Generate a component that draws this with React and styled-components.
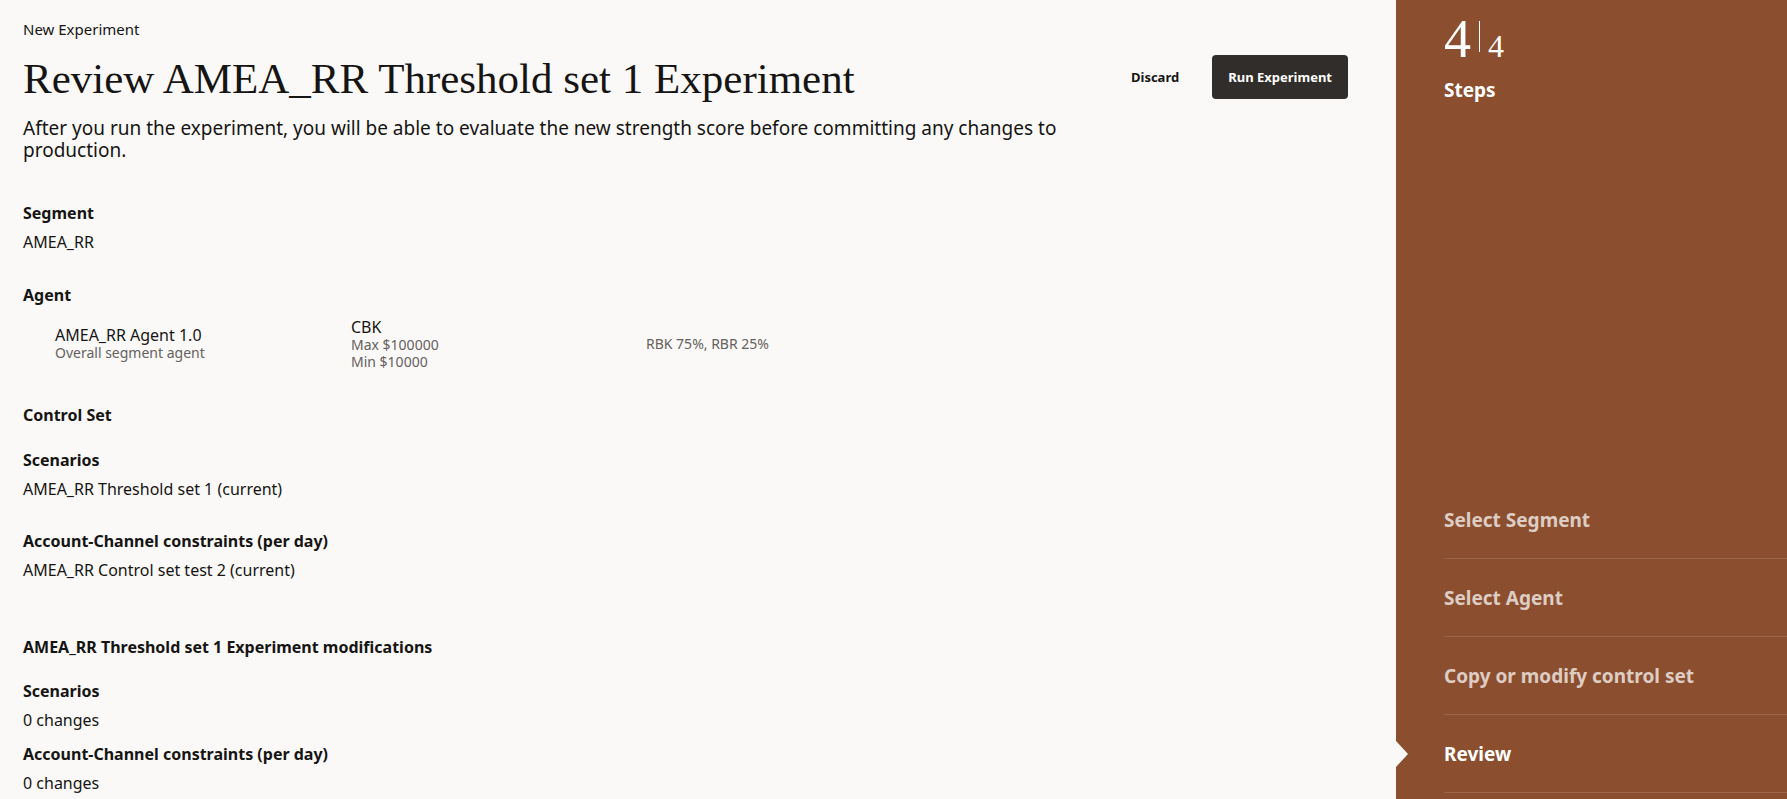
import styled, { createGlobalStyle } from "styled-components";

const GlobalStyle = createGlobalStyle`
  html, body {
    margin: 0;
    padding: 0;
    overflow: hidden;
  }

  body {
    font-family: "Noto Sans", sans-serif;
    color: #161513;
    background: #faf9f8;
  }
`;

const Page = styled.div`
  height: 100vh;

  display: flex;
`;

const Main = styled.main`
  flex: 1;
  min-width: 0;
  padding: 19px 48px 0 23px;

  background: #faf9f8;
`;

const Breadcrumb = styled.div`
  font-size: 15px;
  line-height: 20px;
`;

const HeaderRow = styled.div`
  margin-top: 14px;

  display: flex;
  align-items: flex-start;
  justify-content: space-between;
`;

const Title = styled.h1`
  margin: 0;

  font-family: "Liberation Serif", serif;
  font-size: 43px;
  font-weight: 400;
  line-height: 52px;
`;

const Actions = styled.div`
  margin-top: 2px;

  display: flex;
  align-items: center;
  gap: 17px;
`;

const Button = styled.button`
  height: 44px;
  padding: 0 16px;

  border: none;
  border-radius: 4px;

  font-family: "Noto Sans", sans-serif;
  font-size: 13px;
  font-weight: 700;
  cursor: pointer;

  background: ${(p) => (p.$primary ? "#312d2a" : "transparent")};
  color: ${(p) => (p.$primary ? "#ffffff" : "#161513")};
`;

const Description = styled.p`
  max-width: 1100px;
  margin: 12px 0 0;

  font-size: 19px;
  line-height: 22px;
`;

const Label = styled.div`
  margin-top: ${(p) => p.$top || 0}px;

  font-size: 16px;
  font-weight: 700;
  line-height: 22px;
`;

const Value = styled.div`
  margin-top: 7px;

  font-size: 16px;
  line-height: 22px;
`;

const AgentRow = styled.div`
  margin-top: 12px;
  padding-left: 32px;

  display: grid;
  grid-template-columns: 296px 295px 1fr;
  align-items: center;
`;

const Cell = styled.div`
  display: flex;
  flex-direction: column;
`;

const CellMain = styled.span`
  font-size: 16px;
  line-height: 18px;
`;

const CellSub = styled.span`
  font-size: 14px;
  line-height: ${(p) => (p.$tight ? 17 : 18)}px;
  color: #65615d;
`;

const Sidebar = styled.aside`
  width: 391px;
  flex-shrink: 0;
  padding: 12px 0 6px 48px;
  box-sizing: border-box;

  display: flex;
  flex-direction: column;

  background: #8b4f2f;
  color: #ffffff;
`;

const Counter = styled.div`
  display: flex;
  align-items: baseline;

  font-family: "Liberation Serif", serif;
  line-height: 54px;
`;

const Current = styled.span`
  font-size: 54px;
`;

const Divider = styled.span`
  align-self: flex-start;
  width: 1px;
  height: 31px;
  margin: 9px 8px 0 8px;

  background: #ffffff;
`;

const Total = styled.span`
  font-size: 32px;
`;

const StepsTitle = styled.div`
  margin-top: 5px;

  font-size: 19px;
  font-weight: 700;
  line-height: 24px;
`;

const StepList = styled.ul`
  margin: auto 0 0;
  padding: 0;

  list-style: none;
`;

const StepItem = styled.li`
  position: relative;
  height: 77px;

  display: flex;
  align-items: center;

  border-bottom: 1px solid rgba(255, 255, 255, 0.13);

  font-size: 19px;
  font-weight: 700;
  color: ${(p) => (p.$active ? "#ffffff" : "rgba(255, 255, 255, 0.72)")};

  &.active::before {
    content: "";
    position: absolute;
    left: -48px;
    top: 50%;
    transform: translateY(-50%);

    border-top: 13px solid transparent;
    border-bottom: 13px solid transparent;
    border-left: 12px solid #faf9f8;
  }
`;

const steps = ["Select Segment", "Select Agent", "Copy or modify control set", "Review"];

export default function App() {
  return (
    <Page>
      <GlobalStyle />
      <Main>
        <Breadcrumb>New Experiment</Breadcrumb>
        <HeaderRow>
          <Title>Review AMEA_RR Threshold set 1 Experiment</Title>
          <Actions>
            <Button>Discard</Button>
            <Button $primary>Run Experiment</Button>
          </Actions>
        </HeaderRow>
        <Description>
          After you run the experiment, you will be able to evaluate the new strength score before
          committing any changes to production.
        </Description>

        <Label $top={41}>Segment</Label>
        <Value>AMEA_RR</Value>

        <Label $top={31}>Agent</Label>
        <AgentRow>
          <Cell>
            <CellMain>AMEA_RR Agent 1.0</CellMain>
            <CellSub>Overall segment agent</CellSub>
          </Cell>
          <Cell>
            <CellMain>CBK</CellMain>
            <CellSub $tight>Max $100000</CellSub>
            <CellSub $tight>Min $10000</CellSub>
          </Cell>
          <Cell>
            <CellSub>RBK 75%, RBR 25%</CellSub>
          </Cell>
        </AgentRow>

        <Label $top={34}>Control Set</Label>
        <Label $top={23}>Scenarios</Label>
        <Value>AMEA_RR Threshold set 1 (current)</Value>
        <Label $top={30}>Account-Channel constraints (per day)</Label>
        <Value>AMEA_RR Control set test 2 (current)</Value>

        <Label $top={55}>AMEA_RR Threshold set 1 Experiment modifications</Label>
        <Label $top={22}>Scenarios</Label>
        <Value>0 changes</Value>
        <Label $top={12}>Account-Channel constraints (per day)</Label>
        <Value>0 changes</Value>
      </Main>

      <Sidebar>
        <Counter>
          <Current>4</Current>
          <Divider />
          <Total>4</Total>
        </Counter>
        <StepsTitle>Steps</StepsTitle>
        <StepList>
          {steps.map((step, i) => {
            const active = i === steps.length - 1;
            return (
              <StepItem key={step} $active={active} className={active ? "active" : ""}>
                {step}
              </StepItem>
            );
          })}
        </StepList>
      </Sidebar>
    </Page>
  );
}
